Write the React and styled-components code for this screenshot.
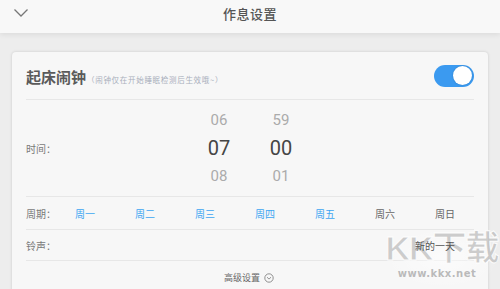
import React, { useState } from "react";
import styled, { createGlobalStyle } from "styled-components";

const GlobalStyle = createGlobalStyle`
  html, body {
    margin: 0;
    padding: 0;
    background: #ededed;
    font-family: "Noto Sans CJK SC", "Noto Sans", sans-serif;
  }
  #root {
    width: 500px;
    height: 289px;
    overflow: hidden;
  }
`;

const Page = styled.div`
  position: relative;
  width: 500px;
  height: 289px;
  background: #ededed;
  overflow: hidden;
`;

const Header = styled.header`
  position: relative;
  height: 33px;
  box-sizing: border-box;
  padding-bottom: 6px;
  display: flex;
  align-items: center;
  justify-content: center;
  background: #f8f8f8;
  box-shadow: 0 2px 5px rgba(0, 0, 0, 0.07);
  z-index: 1;
`;

const BackButton = styled.button`
  position: absolute;
  left: 11px;
  top: 5px;
  width: 20px;
  height: 16px;
  padding: 0;
  border: 0;
  background: none;
  display: flex;
  align-items: center;
  justify-content: center;
`;

const HeaderTitle = styled.h1`
  margin: 0;
  font-size: 13px;
  font-weight: 500;
  color: #555;
  letter-spacing: 0.5px;
`;

const Card = styled.section`
  margin: 19px 12px 0;
  padding: 0 14px;
  background: #f7f7f7;
  border-radius: 4px;
  box-shadow: 0 0 3px rgba(0, 0, 0, 0.16);
  height: 260px;
`;

const Row = styled.div`
  display: flex;
  align-items: center;
  height: ${(p) => p.$h}px;
  border-bottom: ${(p) => (p.$line ? "1px solid #e7e7e7" : "0")};
`;

const TitleGroup = styled.div`
  flex: 1;
  display: flex;
  align-items: baseline;
  padding-top: 2px;
`;

const Title = styled.h2`
  margin: 0;
  font-size: 15px;
  font-weight: 700;
  color: #5a5a5a;
`;

const Hint = styled.span`
  margin-left: 1px;
  font-size: 7.5px;
  letter-spacing: 0.7px;
  color: #a9afbc;
`;

const Toggle = styled.div`
  width: 40px;
  height: 22px;
  border-radius: 11px;
  background: ${(p) => (p.$on ? "#3b9af0" : "#ccc")};
  display: flex;
  align-items: center;
  justify-content: ${(p) => (p.$on ? "flex-end" : "flex-start")};
  padding: 0 2px;
  box-sizing: border-box;
`;

const Knob = styled.div`
  width: 19px;
  height: 19px;
  border-radius: 50%;
  background: #fff;
  box-shadow: 0 0 2px rgba(0, 0, 0, 0.2);
`;

const Label = styled.span`
  width: ${(p) => p.$w}px;
  flex-shrink: 0;
  font-size: 10px;
  color: #7a7a7a;
`;

const Picker = styled.div`
  display: flex;
  gap: 22px;
`;

const PickerCol = styled.div`
  width: 40px;
  display: flex;
  flex-direction: column;
  align-items: center;
`;

const Num = styled.span`
  height: 28px;
  line-height: 28px;
  font-family: Roboto, "Noto Sans", sans-serif;
  font-size: ${(p) => (p.$active ? "20px" : "15px")};
  color: ${(p) => (p.$active ? "#454545" : "#ababab")};
`;

const Day = styled.span`
  width: 60px;
  flex-shrink: 0;
  font-size: 10px;
  color: ${(p) => (p.$on ? "#3ea6f2" : "#666")};

  &:last-child {
    width: auto;
  }
`;

const Value = styled.span`
  position: relative;
  z-index: 3;
  margin-left: auto;
  margin-right: 19px;
  font-size: 10px;
  color: #555;
`;

const MoreRow = styled.div`
  height: 33px;
  display: flex;
  align-items: center;
  justify-content: center;
  gap: 4px;
  font-size: 9px;
  color: #666;
  padding-right: 2px;
`;

const Watermark = styled.div`
  position: absolute;
  z-index: 2;
  left: 384px;
  top: 228px;
  width: 116px;
  height: 61px;
  display: flex;
  flex-direction: column;
  align-items: center;
  background: radial-gradient(ellipse at center, rgba(255, 255, 255, 0.55), rgba(255, 255, 255, 0) 70%);
  pointer-events: none;
`;

const MarkBig = styled.span`
  font-family: "Liberation Sans", "Noto Sans CJK SC", sans-serif;
  font-size: 34px;
  font-weight: 700;
  line-height: 40px;
  color: rgba(190, 190, 190, 0.75);
  -webkit-text-stroke: 1px rgba(255, 255, 255, 0.9);
  letter-spacing: -1px;
`;

const MarkSmall = styled.span`
  font-family: "DejaVu Sans", sans-serif;
  font-size: 10px;
  font-weight: 700;
  color: rgba(175, 175, 175, 0.85);
  letter-spacing: 0.5px;
  margin-left: -10px;
`;

const days = [
  { name: "周一", on: true },
  { name: "周二", on: true },
  { name: "周三", on: true },
  { name: "周四", on: true },
  { name: "周五", on: true },
  { name: "周六", on: false },
  { name: "周日", on: false },
];

const App = () => {
  const [alarmOn, setAlarmOn] = useState(true);

  return (
    <Page>
      <GlobalStyle />
      <Header>
        <BackButton>
          <svg width="16" height="10" viewBox="0 0 16 10">
            <path d="M1.5 1.5 L8 8 L14.5 1.5" fill="none" stroke="#777" strokeWidth="1.3" />
          </svg>
        </BackButton>
        <HeaderTitle>作息设置</HeaderTitle>
      </Header>

      <Card>
        <Row $h={47} $line>
          <TitleGroup>
            <Title>起床闹钟</Title>
            <Hint>（闹钟仅在开始睡眠检测后生效哦~）</Hint>
          </TitleGroup>
          <Toggle $on={alarmOn} onClick={() => setAlarmOn(!alarmOn)}>
            <Knob />
          </Toggle>
        </Row>

        <Row $h={96} $line>
          <Label $w={173}>时间：</Label>
          <Picker>
            <PickerCol>
              <Num>06</Num>
              <Num $active>07</Num>
              <Num>08</Num>
            </PickerCol>
            <PickerCol>
              <Num>59</Num>
              <Num $active>00</Num>
              <Num>01</Num>
            </PickerCol>
          </Picker>
        </Row>

        <Row $h={32} $line>
          <Label $w={49}>周期：</Label>
          {days.map((d) => (
            <Day key={d.name} $on={d.on}>
              {d.name}
            </Day>
          ))}
        </Row>

        <Row $h={30} $line>
          <Label $w={49}>铃声：</Label>
          <Value>新的一天</Value>
        </Row>

        <MoreRow>
          高级设置
          <svg width="10" height="10" viewBox="0 0 10 10">
            <circle cx="5" cy="5" r="4.2" fill="none" stroke="#777" strokeWidth="0.8" />
            <path d="M3 4.2 L5 6.1 L7 4.2" fill="none" stroke="#777" strokeWidth="0.8" />
          </svg>
        </MoreRow>
      </Card>

      <Watermark>
        <MarkBig>KK下载</MarkBig>
        <MarkSmall>www.kkx.net</MarkSmall>
      </Watermark>
    </Page>
  );
};

export default App;
